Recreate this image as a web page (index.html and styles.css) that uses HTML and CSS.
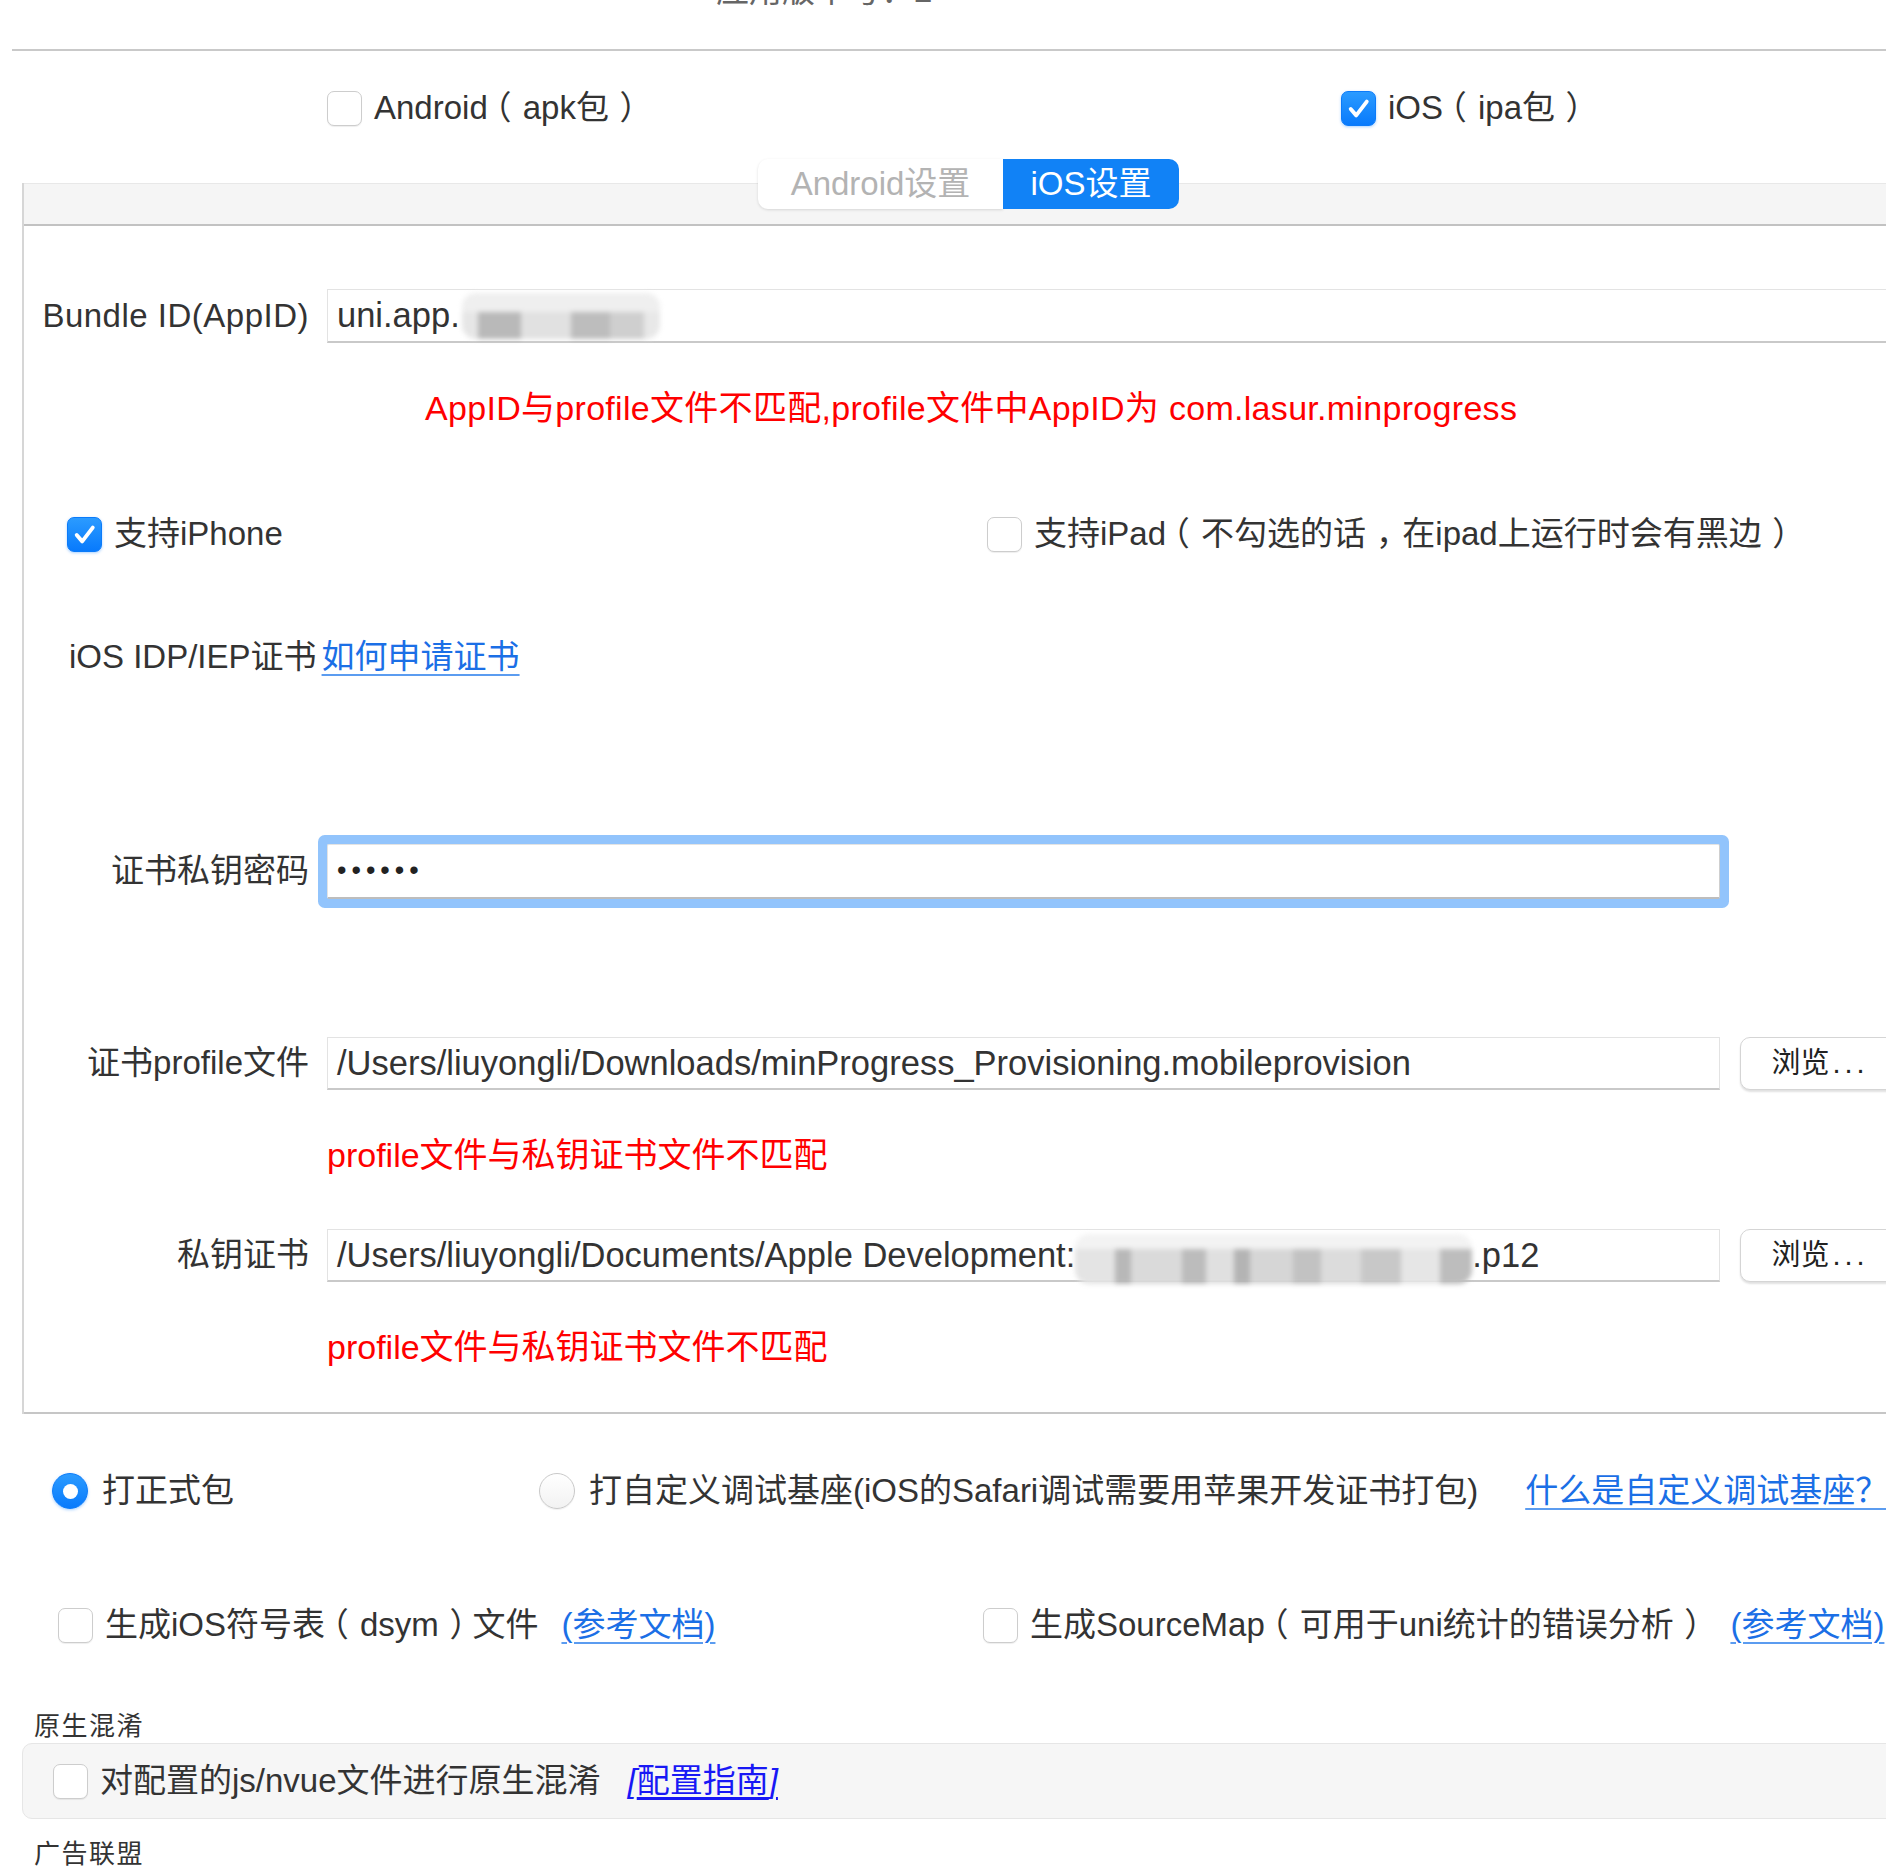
FILE: index.html
```html
<!DOCTYPE html>
<html lang="zh-CN">
<head>
<meta charset="utf-8">
<title>iOS设置</title>
<link rel="stylesheet" href="styles.css">
</head>
<body>
<div class="topbar"><div class="version">应用版本号：2</div></div>

<div class="platforms">
  <div class="opt plat-first"><span class="cb"></span><span>Android<span class="lp">（</span>apk包<span class="rp">）</span></span></div>
  <div class="opt"><span class="cb on"><svg viewBox="0 0 36 36" width="35" height="35"><path d="M9.5 18.5 L15.5 25.5 L27 10.5" fill="none" stroke="#fff" stroke-width="4.2" stroke-linecap="round" stroke-linejoin="round"/></svg></span><span>iOS<span class="lp">（</span>ipa包<span class="rp">）</span></span></div>
</div>

<div class="panel">
  <div class="panel-head">
    <div class="tabs">
      <div class="tab tab-a">Android设置</div>
      <div class="tab tab-i">iOS设置</div>
    </div>
  </div>
  <div class="panel-body">
    <div class="field r1">
      <div class="label">Bundle ID(AppID)</div>
      <div class="input wide"><span>uni.app.</span><span class="blob blob-a"></span></div>
    </div>
    <div class="err e1">AppID与profile文件不匹配,profile文件中AppID为 com.lasur.minprogress</div>
    <div class="opts r3">
      <div class="opt sup-first"><span class="cb on"><svg viewBox="0 0 36 36" width="35" height="35"><path d="M9.5 18.5 L15.5 25.5 L27 10.5" fill="none" stroke="#fff" stroke-width="4.2" stroke-linecap="round" stroke-linejoin="round"/></svg></span><span>支持iPhone</span></div>
      <div class="opt"><span class="cb"></span><span>支持iPad<span class="lp">（</span>不勾选的话<span class="cm">，</span>在ipad上运行时会有黑边<span class="rp">）</span></span></div>
    </div>
    <div class="idp r4"><span>iOS IDP/IEP证书</span><a class="lnk idp-link">如何申请证书</a></div>
    <div class="field r5">
      <div class="label">证书私钥密码</div>
      <div class="input fixed focus"><span class="dots">••••••</span></div>
    </div>
    <div class="field r6">
      <div class="label">证书profile文件</div>
      <div class="input fixed"><span>/Users/liuyongli/Downloads/minProgress_Provisioning.mobileprovision</span></div>
      <div class="btn">浏览<span class="ell">...</span></div>
    </div>
    <div class="err e2">profile文件与私钥证书文件不匹配</div>
    <div class="field r8">
      <div class="label">私钥证书</div>
      <div class="input fixed"><span>/Users/liuyongli/Documents/Apple Development:</span><span class="blob blob-b"></span><span>.p12</span></div>
      <div class="btn">浏览<span class="ell">...</span></div>
    </div>
    <div class="err e2">profile文件与私钥证书文件不匹配</div>
  </div>
</div>

<div class="opts radios">
  <div class="opt rad-first"><span class="rd on"><span class="dot"></span></span><span>打正式包</span></div>
  <div class="opt"><span class="rd"></span><span>打自定义调试基座(iOS的Safari调试需要用苹果开发证书打包)</span><a class="lnk link-gap">什么是自定义调试基座？</a></div>
</div>

<div class="opts checks">
  <div class="opt chk-first"><span class="cb"></span><span>生成iOS符号表<span class="lp">（</span>dsym<span class="rp">）</span>文件</span><a class="lnk ref-gap">(参考文档)</a></div>
  <div class="opt"><span class="cb"></span><span>生成SourceMap<span class="lp">（</span>可用于uni统计的错误分析<span class="rp">）</span></span><a class="lnk ref-gap">(参考文档)</a></div>
</div>

<div class="section-title obf-title">原生混淆</div>
<div class="graybox">
  <div class="opt"><span class="cb"></span><span>对配置的js/nvue文件进行原生混淆</span><a class="guide"><i>[</i>配置指南<i>]</i></a></div>
</div>
<div class="section-title ad-title">广告联盟</div>
</body>
</html>
```
FILE: styles.css
```css
* { box-sizing: border-box; }
html, body { margin: 0; padding: 0; background: #fff; }
body {
  width: 1886px;
  height: 1866px;
  overflow: hidden;
  font-family: "Liberation Sans", "Noto Sans CJK SC", sans-serif;
  font-size: 33px;
  line-height: 1.3;
  color: #333;
}

.topbar {
  height: 51px;
  margin-left: 12px;
  border-bottom: 2px solid #c9c9c9;
  overflow: hidden;
}
.version {
  margin: -26px 0 0 704px;
  line-height: 33px;
  color: #666;
  white-space: nowrap;
}

.opt { display: flex; align-items: center; gap: 12px; height: 44px; white-space: nowrap; flex: none; }

/* full-width punctuation, spaced like the original UI font */
.lp, .rp, .cm { display: inline-block; font-feature-settings: "halt"; }
.lp { margin: 0 0.34em 0 0.22em; }
.rp { margin: 0 0.2em 0 0.32em; }
.cm { margin: 0 0.3em 0 0.3em; }

.platforms {
  display: flex;
  height: 132px;
  padding: 35px 0 0 327px;
}
.plat-first { width: 1014px; }

.cb {
  width: 35px; height: 35px; flex: none;
  border-radius: 7px;
  border: 1px solid #cdcdcd;
  background: #fff;
  box-shadow: 0 1px 1px rgba(0,0,0,0.07);
  display: flex; align-items: center; justify-content: center;
}
.cb.on {
  border-color: #0b7bfa;
  background: linear-gradient(#2b9bff, #087afc);
  box-shadow: 0 1px 3px rgba(10,122,255,0.35);
}
.cb svg { display: block; }

.rd {
  width: 36px; height: 36px; flex: none;
  border-radius: 50%;
  border: 1px solid #c9c9c9;
  background: linear-gradient(#fff, #f2f2f2);
  box-shadow: 0 1px 1px rgba(0,0,0,0.06);
  display: flex; align-items: center; justify-content: center;
}
.rd.on {
  border-color: #0b7bfa;
  background: linear-gradient(#2b9bff, #087afc);
  box-shadow: 0 1px 3px rgba(10,122,255,0.35);
}
.rd .dot { width: 15px; height: 15px; border-radius: 50%; background: #fff; }

.panel {
  width: 1950px;
  margin-left: 22px;
  border-left: 2px solid #d6d6d6;
}
.panel-head {
  height: 43px;
  background: #f5f5f5;
  border-top: 1px solid #e8e8e8;
  border-bottom: 2px solid #c2c2c2;
  padding-left: 734px;
}
.tabs { display: flex; margin-top: -25px; height: 50px; }
.tab {
  height: 50px;
  display: flex; align-items: center; justify-content: center;
  font-size: 33px;
}
.tab-a {
  width: 245px;
  background: #fff;
  color: #b3b3b3;
  border-radius: 10px 0 0 10px;
  box-shadow: 0 1px 3px rgba(0,0,0,0.13);
}
.tab-i {
  width: 176px;
  background: #1182f6;
  color: #fff;
  border-radius: 0 10px 10px 0;
}

.panel-body {
  padding-bottom: 43px;
  border-bottom: 2px solid #c6c6c6;
}
.field { display: flex; align-items: center; }
.label {
  width: 285px;
  margin-right: 18px;
  text-align: right;
  flex: none;
  white-space: nowrap;
}
.r1 .label { letter-spacing: 0.5px; }
.input {
  height: 54px;
  border: 1px solid #e3e3e3;
  border-bottom: 2px solid #c9c9c9;
  padding-left: 9px;
  display: flex; align-items: center;
  font-size: 34.5px;
  white-space: nowrap;
  background: #fff;
}
.input.wide { flex: 1; }
.input.fixed { width: 1393px; flex: none; height: 53px; }
.input.focus {
  height: 55px;
  border-right-color: #cfcfcf;
  border-bottom-color: #bdbdbd;
  border-radius: 2px;
  box-shadow: 0 0 0 9px #92c4fc;
}
.dots { font-size: 27px; letter-spacing: 5px; color: #222; }

.blob {
  display: inline-block;
  flex: none;
  height: 46px;
  border-radius: 14px;
  filter: blur(2.5px);
  background:
    linear-gradient(to bottom, #efefef 0 42%, rgba(0,0,0,0) 42%),
    linear-gradient(90deg, #e6e6e6 0 8%, #b9b9b9 8% 30%, #e1e1e1 30% 55%, #bdbdbd 55% 75%, #cfcfcf 75% 92%, #e8e8e8 92% 100%);
}
.blob-a { width: 198px; margin-left: 2px; }
.blob-b {
  width: 397px; height: 50px; margin-top: 8px;
  background:
    linear-gradient(to bottom, #f3f3f3 0 30%, rgba(0,0,0,0) 30%),
    linear-gradient(90deg, #e4e4e4 0 10%, #b8b8b8 10% 14%, #dadada 14% 27%, #bcbcbc 27% 33%, #e0e0e0 33% 40%, #b4b4b4 40% 44%, #d6d6d6 44% 55%, #c2c2c2 55% 62%, #dcdcdc 62% 72%, #c8c8c8 72% 82%, #e6e6e6 82% 92%, #bdbdbd 92% 100%);
}

.btn {
  width: 160px; height: 53px; flex: none;
  margin-left: 20px;
  border: 1px solid #d5d5d5;
  border-radius: 10px;
  background: #fff;
  box-shadow: 0 2px 2px rgba(0,0,0,0.12);
  display: flex; align-items: center; justify-content: center;
  font-size: 29px;
  color: #222;
}
.ell { letter-spacing: 4px; margin-left: 3px; }

.err { color: #f00; font-size: 34px; line-height: 44px; height: 44px; white-space: nowrap; }
.e1 { letter-spacing: 0.3px; }

.r1 { margin-top: 63px; }
.e1 { margin-top: 43px; padding-left: 401px; }
.opts { display: flex; }
.r3 { margin-top: 82px; padding-left: 43px; }
.sup-first { width: 920px; }
.idp { margin-top: 79px; padding-left: 45px; height: 44px; display: flex; align-items: center; white-space: nowrap; }
.idp-link { margin-left: 5px; }
.r5 { margin-top: 165px; }
.r6 { margin-top: 138px; }
.e2 { margin-top: 43px; padding-left: 303px; }
.r8 { margin-top: 52px; }

.lnk {
  color: #1b6fe6;
  text-decoration: underline;
  text-decoration-thickness: 2px;
  text-underline-offset: 6px;
  text-decoration-color: #5b9cf0;
}

.radios { margin-top: 55px; padding-left: 52px; }
.radios .opt { gap: 14px; }
.rad-first { width: 487px; }
.link-gap { margin-left: 33px; }

.checks { margin-top: 90px; padding-left: 58px; }
.chk-first { width: 925px; }
.ref-gap { margin-left: 11px; }

.section-title {
  font-size: 26px;
  letter-spacing: 1.5px;
  height: 34px;
  line-height: 34px;
  padding-left: 34px;
  color: #333;
  white-space: nowrap;
}
.obf-title { margin-top: 62px; }
.graybox {
  width: 1900px;
  height: 76px;
  margin-left: 22px;
  background: #f6f6f6;
  border: 1px solid #e6e6e6;
  border-radius: 10px;
  padding-left: 30px;
  display: flex; align-items: center;
}
.guide {
  margin-left: 15px;
  color: #1818f5;
  text-decoration: underline;
  text-underline-offset: 5px;
}
.guide i { font-style: italic; }
.ad-title { margin-top: 18px; }
```
